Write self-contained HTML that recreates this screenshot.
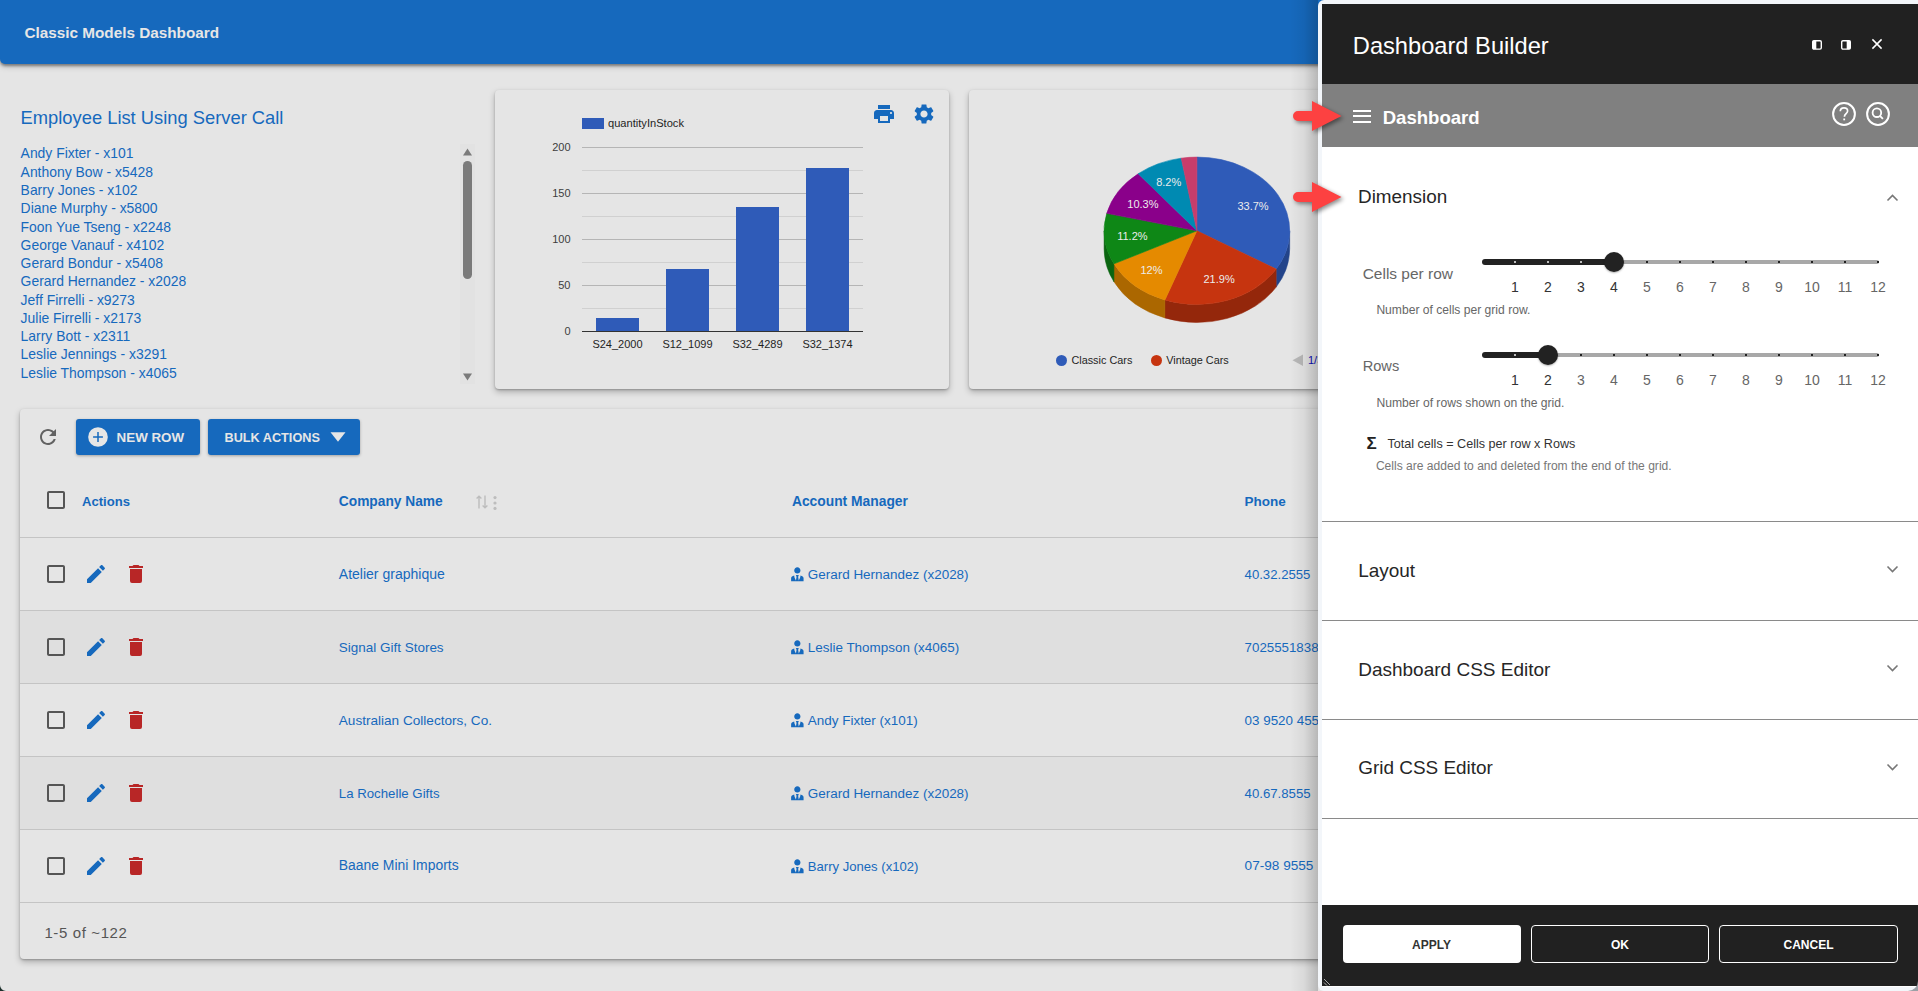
<!DOCTYPE html>
<html><head><meta charset="utf-8"><title>Classic Models Dashboard</title>
<style>
html,body{margin:0;padding:0;}
body{width:1918px;height:991px;overflow:hidden;position:relative;background:#e5e5e5;font-family:"Liberation Sans", sans-serif;}
.t{position:absolute;white-space:nowrap;font-family:"Liberation Sans", sans-serif;}
svg{overflow:visible}
</style></head><body>
<div style="position:absolute;left:0px;top:0px;width:1918px;height:64px;background:#1669bd;border-radius:0 0 0 5px;box-shadow:0 2px 3px rgba(0,0,0,.4),0 3px 6px rgba(0,0,0,.15)"></div>
<div class="t" style="left:24.40px;top:24.55px;font-size:15.3px;line-height:15.3px;color:#e6e6e6;font-weight:700;">Classic Models Dashboard</div>
<div class="t" style="left:20.60px;top:108.78px;font-size:18.34px;line-height:18.34px;color:#1669bd;font-weight:400;">Employee List Using Server Call</div>
<div class="t" style="left:20.60px;top:147.41px;font-size:13.93px;line-height:13.93px;color:#1669bd;font-weight:400;">Andy Fixter - x101</div>
<div class="t" style="left:20.60px;top:165.69px;font-size:13.93px;line-height:13.93px;color:#1669bd;font-weight:400;">Anthony Bow - x5428</div>
<div class="t" style="left:20.60px;top:183.97px;font-size:13.93px;line-height:13.93px;color:#1669bd;font-weight:400;">Barry Jones - x102</div>
<div class="t" style="left:20.60px;top:202.25px;font-size:13.93px;line-height:13.93px;color:#1669bd;font-weight:400;">Diane Murphy - x5800</div>
<div class="t" style="left:20.60px;top:220.53px;font-size:13.93px;line-height:13.93px;color:#1669bd;font-weight:400;">Foon Yue Tseng - x2248</div>
<div class="t" style="left:20.60px;top:238.81px;font-size:13.93px;line-height:13.93px;color:#1669bd;font-weight:400;">George Vanauf - x4102</div>
<div class="t" style="left:20.60px;top:257.09px;font-size:13.93px;line-height:13.93px;color:#1669bd;font-weight:400;">Gerard Bondur - x5408</div>
<div class="t" style="left:20.60px;top:275.37px;font-size:13.93px;line-height:13.93px;color:#1669bd;font-weight:400;">Gerard Hernandez - x2028</div>
<div class="t" style="left:20.60px;top:293.65px;font-size:13.93px;line-height:13.93px;color:#1669bd;font-weight:400;">Jeff Firrelli - x9273</div>
<div class="t" style="left:20.60px;top:311.93px;font-size:13.93px;line-height:13.93px;color:#1669bd;font-weight:400;">Julie Firrelli - x2173</div>
<div class="t" style="left:20.60px;top:330.21px;font-size:13.93px;line-height:13.93px;color:#1669bd;font-weight:400;">Larry Bott - x2311</div>
<div class="t" style="left:20.60px;top:348.49px;font-size:13.93px;line-height:13.93px;color:#1669bd;font-weight:400;">Leslie Jennings - x3291</div>
<div class="t" style="left:20.60px;top:366.77px;font-size:13.93px;line-height:13.93px;color:#1669bd;font-weight:400;">Leslie Thompson - x4065</div>
<div style="position:absolute;left:460px;top:144px;width:15px;height:240px;background:#e2e2e2"></div>
<svg style="position:absolute;left:463px;top:148px;" width="9" height="8" viewBox="0 0 9 8"><path d="M4.5 0.5 L9 7.5 L0 7.5 Z" fill="#7a7a7a"/></svg>
<div style="position:absolute;left:463px;top:161px;width:9px;height:118px;background:#7a7a7a;border-radius:4.5px"></div>
<svg style="position:absolute;left:463px;top:373px;" width="9" height="8" viewBox="0 0 9 8"><path d="M0 0.5 L9 0.5 L4.5 7.5 Z" fill="#7a7a7a"/></svg>
<div style="position:absolute;left:495px;top:89.5px;width:454px;height:299px;background:#e5e5e5;border-radius:4px;box-shadow:0 3px 6px rgba(0,0,0,.25),0 1px 2px rgba(0,0,0,.22)"></div>
<div style="position:absolute;left:582px;top:118px;width:22px;height:11px;background:#2f5bb8"></div>
<div class="t" style="left:608.00px;top:118.09px;font-size:11.12px;line-height:11.12px;color:#1f1f1f;font-weight:400;">quantityInStock</div>
<svg style="position:absolute;left:582px;top:147px;" width="281" height="162" viewBox="0 0 281 162"><rect x="0" y="0" width="281" height="1" fill="#b5b5b5"/><rect x="0" y="23" width="281" height="1" fill="#d0d0d0"/><rect x="0" y="46" width="281" height="1" fill="#b5b5b5"/><rect x="0" y="69" width="281" height="1" fill="#d0d0d0"/><rect x="0" y="92" width="281" height="1" fill="#b5b5b5"/><rect x="0" y="115" width="281" height="1" fill="#d0d0d0"/><rect x="0" y="138" width="281" height="1" fill="#b5b5b5"/><rect x="0" y="161" width="281" height="1" fill="#d0d0d0"/></svg>
<div style="position:absolute;left:596px;top:318px;width:43px;height:13px;background:#2f5bb8"></div>
<div style="position:absolute;left:666px;top:268.7px;width:43px;height:62.30000000000001px;background:#2f5bb8"></div>
<div style="position:absolute;left:736px;top:207px;width:43px;height:124px;background:#2f5bb8"></div>
<div style="position:absolute;left:806px;top:168px;width:43px;height:163px;background:#2f5bb8"></div>
<div style="position:absolute;left:582px;top:331px;width:281px;height:1.2px;background:#333"></div>
<div class="t" style="left:-29.50px;width:600px;text-align:right;top:141.69px;font-size:11px;line-height:11px;color:#3d3d3d;font-weight:400;">200</div>
<div class="t" style="left:-29.50px;width:600px;text-align:right;top:187.69px;font-size:11px;line-height:11px;color:#3d3d3d;font-weight:400;">150</div>
<div class="t" style="left:-29.50px;width:600px;text-align:right;top:233.69px;font-size:11px;line-height:11px;color:#3d3d3d;font-weight:400;">100</div>
<div class="t" style="left:-29.50px;width:600px;text-align:right;top:279.69px;font-size:11px;line-height:11px;color:#3d3d3d;font-weight:400;">50</div>
<div class="t" style="left:-29.50px;width:600px;text-align:right;top:325.69px;font-size:11px;line-height:11px;color:#3d3d3d;font-weight:400;">0</div>
<div class="t" style="left:317.50px;width:600px;text-align:center;top:338.69px;font-size:11px;line-height:11px;color:#1f1f1f;font-weight:400;">S24_2000</div>
<div class="t" style="left:387.50px;width:600px;text-align:center;top:338.69px;font-size:11px;line-height:11px;color:#1f1f1f;font-weight:400;">S12_1099</div>
<div class="t" style="left:457.50px;width:600px;text-align:center;top:338.69px;font-size:11px;line-height:11px;color:#1f1f1f;font-weight:400;">S32_4289</div>
<div class="t" style="left:527.50px;width:600px;text-align:center;top:338.69px;font-size:11px;line-height:11px;color:#1f1f1f;font-weight:400;">S32_1374</div>
<svg style="position:absolute;left:872px;top:102px;" width="24" height="24" viewBox="0 0 24 24"><path fill="#1669bd" d="M19 8H5c-1.66 0-3 1.34-3 3v6h4v4h12v-4h4v-6c0-1.66-1.34-3-3-3zm-3 11H8v-5h8v5zm3-7c-.55 0-1-.45-1-1s.45-1 1-1 1 .45 1 1-.45 1-1 1zm1-9H6v4h12V3z"/></svg>
<svg style="position:absolute;left:912px;top:102px;" width="24" height="24" viewBox="0 0 24 24"><path fill="#1669bd" d="M19.14 12.94c.04-.3.06-.61.06-.94 0-.32-.02-.64-.07-.94l2.03-1.58c.18-.14.23-.41.12-.61l-1.92-3.32c-.12-.22-.37-.29-.59-.22l-2.39.96c-.5-.38-1.03-.7-1.62-.94l-.36-2.54c-.04-.24-.24-.41-.48-.41h-3.84c-.24 0-.43.17-.47.41l-.36 2.54c-.59.24-1.13.57-1.62.94l-2.39-.96c-.22-.08-.47 0-.59.22L2.74 8.87c-.12.21-.08.47.12.61l2.03 1.58c-.05.3-.09.63-.09.94s.02.64.07.94l-2.03 1.58c-.18.14-.23.41-.12.61l1.92 3.32c.12.22.37.29.59.22l2.39-.96c.5.38 1.03.7 1.62.94l.36 2.54c.05.24.24.41.48.41h3.84c.24 0 .44-.17.47-.41l.36-2.54c.59-.24 1.13-.56 1.62-.94l2.39.96c.22.08.47 0 .59-.22l1.92-3.32c.12-.22.07-.47-.12-.61l-2.01-1.58zM12 15.6c-1.98 0-3.6-1.62-3.6-3.6s1.62-3.6 3.6-3.6 3.6 1.62 3.6 3.6-1.62 3.6-3.6 3.6z"/></svg>
<div style="position:absolute;left:969px;top:89.5px;width:400px;height:299px;background:#e5e5e5;border-radius:4px;box-shadow:0 3px 6px rgba(0,0,0,.25),0 1px 2px rgba(0,0,0,.22)"></div>
<svg style="position:absolute;left:960px;top:140px;" width="360" height="200" viewBox="0 0 360 200"><path fill="#23448a" d="M329.70 90.80 A92.8 73.7 0 0 1 316.18 129.11 L316.18 147.11 A92.8 73.7 0 0 0 329.70 108.80 Z" stroke="#23448a" stroke-width="0.5"/><path fill="#94270b" d="M316.18 129.11 A92.8 73.7 0 0 1 204.92 159.98 L204.92 177.98 A92.8 73.7 0 0 0 316.18 147.11 Z" stroke="#94270b" stroke-width="0.5"/><path fill="#ab6700" d="M204.92 159.98 A92.8 73.7 0 0 1 153.95 123.85 L153.95 141.85 A92.8 73.7 0 0 0 204.92 177.98 Z" stroke="#ab6700" stroke-width="0.5"/><path fill="#0a6510" d="M153.95 123.85 A92.8 73.7 0 0 1 144.10 90.80 L144.10 108.80 A92.8 73.7 0 0 0 153.95 141.85 Z" stroke="#0a6510" stroke-width="0.5"/><path fill="#2f5bb8" stroke="#2f5bb8" stroke-width="0.6" d="M236.90 90.80 L236.90 17.10 A92.8 73.7 0 0 1 316.18 129.11 Z"/><path fill="#c6340f" stroke="#c6340f" stroke-width="0.6" d="M236.90 90.80 L316.18 129.11 A92.8 73.7 0 0 1 204.92 159.98 Z"/><path fill="#e58a00" stroke="#e58a00" stroke-width="0.6" d="M236.90 90.80 L204.92 159.98 A92.8 73.7 0 0 1 153.95 123.85 Z"/><path fill="#0e8716" stroke="#0e8716" stroke-width="0.6" d="M236.90 90.80 L153.95 123.85 A92.8 73.7 0 0 1 146.73 73.37 Z"/><path fill="#8a008a" stroke="#8a008a" stroke-width="0.6" d="M236.90 90.80 L146.73 73.37 A92.8 73.7 0 0 1 178.20 33.72 Z"/><path fill="#008ab2" stroke="#008ab2" stroke-width="0.6" d="M236.90 90.80 L178.20 33.72 A92.8 73.7 0 0 1 221.23 18.16 Z"/><path fill="#c73d6b" stroke="#c73d6b" stroke-width="0.6" d="M236.90 90.80 L221.23 18.16 A92.8 73.7 0 0 1 236.90 17.10 Z"/></svg>
<div class="t" style="left:953.00px;width:600px;text-align:center;top:200.89px;font-size:11px;line-height:11px;color:#ececec;font-weight:400;">33.7%</div>
<div class="t" style="left:919.10px;width:600px;text-align:center;top:274.49px;font-size:11px;line-height:11px;color:#ececec;font-weight:400;">21.9%</div>
<div class="t" style="left:851.50px;width:600px;text-align:center;top:264.79px;font-size:11px;line-height:11px;color:#ececec;font-weight:400;">12%</div>
<div class="t" style="left:832.40px;width:600px;text-align:center;top:231.09px;font-size:11px;line-height:11px;color:#ececec;font-weight:400;">11.2%</div>
<div class="t" style="left:842.90px;width:600px;text-align:center;top:198.89px;font-size:11px;line-height:11px;color:#ececec;font-weight:400;">10.3%</div>
<div class="t" style="left:868.70px;width:600px;text-align:center;top:177.09px;font-size:11px;line-height:11px;color:#ececec;font-weight:400;">8.2%</div>
<svg style="position:absolute;left:1055.9px;top:354.9px;" width="11" height="11" viewBox="0 0 11 11"><circle cx="5.5" cy="5.5" r="5.5" fill="#2f5bb8"/></svg>
<div class="t" style="left:1071.40px;top:355.10px;font-size:10.87px;line-height:10.87px;color:#1f1f1f;font-weight:400;">Classic Cars</div>
<svg style="position:absolute;left:1151.1px;top:354.9px;" width="11" height="11" viewBox="0 0 11 11"><circle cx="5.5" cy="5.5" r="5.5" fill="#c6340f"/></svg>
<div class="t" style="left:1166.20px;top:355.10px;font-size:10.87px;line-height:10.87px;color:#1f1f1f;font-weight:400;">Vintage Cars</div>
<svg style="position:absolute;left:1292px;top:354px;" width="12" height="13" viewBox="0 0 12 13"><path d="M11 0.5 L11 12 L0.5 6.2 Z" fill="#b8b8b8"/></svg>
<div class="t" style="left:1308.00px;top:354.99px;font-size:11px;line-height:11px;color:#0d0db5;font-weight:400;">1/3</div>
<div style="position:absolute;left:20px;top:409px;width:1400px;height:550px;background:#e5e5e5;border-radius:4px;box-shadow:0 3px 6px rgba(0,0,0,.25),0 1px 2px rgba(0,0,0,.22)"></div>
<svg style="position:absolute;left:36px;top:425px;" width="24" height="24" viewBox="0 0 24 24"><path fill="#626262" d="M17.65 6.35C16.2 4.9 14.21 4 12 4c-4.42 0-7.99 3.58-7.99 8s3.57 8 7.99 8c3.73 0 6.84-2.55 7.73-6h-2.08c-.82 2.33-3.04 4-5.65 4-3.31 0-6-2.69-6-6s2.69-6 6-6c1.66 0 3.14.69 4.22 1.78L13 11h7V4l-2.35 2.35z"/></svg>
<div style="position:absolute;left:76px;top:419px;width:124px;height:36px;background:#1669bd;border-radius:3px;box-shadow:0 1px 3px rgba(0,0,0,.3)"></div>
<svg style="position:absolute;left:88px;top:427px;" width="20" height="20" viewBox="0 0 20 20"><circle cx="10" cy="10" r="9.8" fill="#e6e6e6"/><path d="M10 5.1v9.8M5.1 10h9.8" stroke="#1669bd" stroke-width="1.5"/></svg>
<div class="t" style="left:116.60px;top:430.88px;font-size:13.37px;line-height:13.37px;color:#e6e6e6;font-weight:700;">NEW ROW</div>
<div style="position:absolute;left:208px;top:419px;width:152px;height:36px;background:#1669bd;border-radius:3px;box-shadow:0 1px 3px rgba(0,0,0,.3)"></div>
<div class="t" style="left:224.50px;top:432.25px;font-size:12.7px;line-height:12.7px;color:#e6e6e6;font-weight:700;">BULK ACTIONS</div>
<svg style="position:absolute;left:330px;top:432px;" width="16" height="10" viewBox="0 0 16 10"><path d="M0.5 0.3 L15.5 0.3 L8 9.7 Z" fill="#e6e6e6"/></svg>
<svg style="position:absolute;left:44px;top:488px;" width="24" height="24" viewBox="0 0 24 24"><path fill="#555" d="M19 5v14H5V5h14m0-2H5c-1.1 0-2 .9-2 2v14c0 1.1.9 2 2 2h14c1.1 0 2-.9 2-2V5c0-1.1-.9-2-2-2z"/></svg>
<div class="t" style="left:82.00px;top:494.52px;font-size:13.09px;line-height:13.09px;color:#1669bd;font-weight:700;">Actions</div>
<div class="t" style="left:338.80px;top:494.95px;font-size:13.76px;line-height:13.76px;color:#1669bd;font-weight:700;">Company Name</div>
<svg style="position:absolute;left:476px;top:495px;" width="12" height="14" viewBox="0 0 12 14"><path d="M3 13.5V1.2M0.6 3.6L3 1.2L5.4 3.6M9 0.5V12.8M6.6 10.4L9 12.8L11.4 10.4" stroke="#bdbdbd" stroke-width="1.4" fill="none"/></svg>
<svg style="position:absolute;left:492px;top:495px;" width="6" height="15" viewBox="0 0 6 15"><circle cx="3" cy="2.6" r="1.6" fill="#bdbdbd"/><circle cx="3" cy="8" r="1.6" fill="#bdbdbd"/><circle cx="3" cy="13.4" r="1.6" fill="#bdbdbd"/></svg>
<div class="t" style="left:791.90px;top:494.89px;font-size:13.83px;line-height:13.83px;color:#1669bd;font-weight:700;">Account Manager</div>
<div class="t" style="left:1244.50px;top:495.17px;font-size:13.5px;line-height:13.5px;color:#1669bd;font-weight:700;">Phone</div>
<div style="position:absolute;left:20px;top:537px;width:1300px;height:1px;background:#c4c4c4"></div>
<div style="position:absolute;left:20px;top:610px;width:1300px;height:1px;background:#c4c4c4"></div>
<svg style="position:absolute;left:44px;top:562px;" width="24" height="24" viewBox="0 0 24 24"><path fill="#555" d="M19 5v14H5V5h14m0-2H5c-1.1 0-2 .9-2 2v14c0 1.1.9 2 2 2h14c1.1 0 2-.9 2-2V5c0-1.1-.9-2-2-2z"/></svg>
<svg style="position:absolute;left:84px;top:562px;" width="24" height="24" viewBox="0 0 24 24"><path fill="#1669bd" d="M3 17.25V21h3.75L17.81 9.94l-3.75-3.75L3 17.25zM20.71 7.04c.39-.39.39-1.02 0-1.41l-2.34-2.34c-.39-.39-1.02-.39-1.41 0l-1.83 1.83 3.75 3.75 1.83-1.83z"/></svg>
<svg style="position:absolute;left:124px;top:562px;" width="24" height="24" viewBox="0 0 24 24"><path fill="#b82626" d="M19,4H15.5L14.5,3H9.5L8.5,4H5V6H19M6,19A2,2 0 0,0 8,21H16A2,2 0 0,0 18,19V7H6V19Z"/></svg>
<div class="t" style="left:338.80px;top:567.13px;font-size:14.02px;line-height:14.02px;color:#1669bd;font-weight:400;">Atelier graphique</div>
<svg style="position:absolute;left:788.4px;top:564.6px;" width="18.7" height="18.7" viewBox="0 0 24 24"><path fill="#1669bd" d="M12 3C14.21 3 16 4.79 16 7S14.21 11 12 11 8 9.21 8 7 9.79 3 12 3M16 13.54C16 14.6 15.72 17.07 13.81 19.83L13 15L13.94 13.12C13.32 13.05 12.67 13 12 13S10.68 13.05 10.06 13.12L11 15L10.19 19.83C8.28 17.07 8 14.6 8 13.54C5.61 14.24 4 15.5 4 17V21H20V17C20 15.5 18.4 14.24 16 13.54Z"/></svg>
<div class="t" style="left:807.80px;top:567.61px;font-size:13.46px;line-height:13.46px;color:#1669bd;font-weight:400;">Gerard Hernandez (x2028)</div>
<div class="t" style="left:1244.60px;top:567.87px;font-size:13.15px;line-height:13.15px;color:#1669bd;font-weight:400;">40.32.2555</div>
<div style="position:absolute;left:20px;top:611px;width:1300px;height:72px;background:#dfdfdf"></div>
<div style="position:absolute;left:20px;top:683px;width:1300px;height:1px;background:#c4c4c4"></div>
<svg style="position:absolute;left:44px;top:635px;" width="24" height="24" viewBox="0 0 24 24"><path fill="#555" d="M19 5v14H5V5h14m0-2H5c-1.1 0-2 .9-2 2v14c0 1.1.9 2 2 2h14c1.1 0 2-.9 2-2V5c0-1.1-.9-2-2-2z"/></svg>
<svg style="position:absolute;left:84px;top:635px;" width="24" height="24" viewBox="0 0 24 24"><path fill="#1669bd" d="M3 17.25V21h3.75L17.81 9.94l-3.75-3.75L3 17.25zM20.71 7.04c.39-.39.39-1.02 0-1.41l-2.34-2.34c-.39-.39-1.02-.39-1.41 0l-1.83 1.83 3.75 3.75 1.83-1.83z"/></svg>
<svg style="position:absolute;left:124px;top:635px;" width="24" height="24" viewBox="0 0 24 24"><path fill="#b82626" d="M19,4H15.5L14.5,3H9.5L8.5,4H5V6H19M6,19A2,2 0 0,0 8,21H16A2,2 0 0,0 18,19V7H6V19Z"/></svg>
<div class="t" style="left:338.80px;top:640.60px;font-size:13.47px;line-height:13.47px;color:#1669bd;font-weight:400;">Signal Gift Stores</div>
<svg style="position:absolute;left:788.4px;top:637.6px;" width="18.7" height="18.7" viewBox="0 0 24 24"><path fill="#1669bd" d="M12 3C14.21 3 16 4.79 16 7S14.21 11 12 11 8 9.21 8 7 9.79 3 12 3M16 13.54C16 14.6 15.72 17.07 13.81 19.83L13 15L13.94 13.12C13.32 13.05 12.67 13 12 13S10.68 13.05 10.06 13.12L11 15L10.19 19.83C8.28 17.07 8 14.6 8 13.54C5.61 14.24 4 15.5 4 17V21H20V17C20 15.5 18.4 14.24 16 13.54Z"/></svg>
<div class="t" style="left:807.80px;top:640.62px;font-size:13.44px;line-height:13.44px;color:#1669bd;font-weight:400;">Leslie Thompson (x4065)</div>
<div class="t" style="left:1244.60px;top:640.74px;font-size:13.3px;line-height:13.3px;color:#1669bd;font-weight:400;">7025551838</div>
<div style="position:absolute;left:20px;top:756px;width:1300px;height:1px;background:#c4c4c4"></div>
<svg style="position:absolute;left:44px;top:708px;" width="24" height="24" viewBox="0 0 24 24"><path fill="#555" d="M19 5v14H5V5h14m0-2H5c-1.1 0-2 .9-2 2v14c0 1.1.9 2 2 2h14c1.1 0 2-.9 2-2V5c0-1.1-.9-2-2-2z"/></svg>
<svg style="position:absolute;left:84px;top:708px;" width="24" height="24" viewBox="0 0 24 24"><path fill="#1669bd" d="M3 17.25V21h3.75L17.81 9.94l-3.75-3.75L3 17.25zM20.71 7.04c.39-.39.39-1.02 0-1.41l-2.34-2.34c-.39-.39-1.02-.39-1.41 0l-1.83 1.83 3.75 3.75 1.83-1.83z"/></svg>
<svg style="position:absolute;left:124px;top:708px;" width="24" height="24" viewBox="0 0 24 24"><path fill="#b82626" d="M19,4H15.5L14.5,3H9.5L8.5,4H5V6H19M6,19A2,2 0 0,0 8,21H16A2,2 0 0,0 18,19V7H6V19Z"/></svg>
<div class="t" style="left:338.80px;top:713.50px;font-size:13.58px;line-height:13.58px;color:#1669bd;font-weight:400;">Australian Collectors, Co.</div>
<svg style="position:absolute;left:788.4px;top:710.6px;" width="18.7" height="18.7" viewBox="0 0 24 24"><path fill="#1669bd" d="M12 3C14.21 3 16 4.79 16 7S14.21 11 12 11 8 9.21 8 7 9.79 3 12 3M16 13.54C16 14.6 15.72 17.07 13.81 19.83L13 15L13.94 13.12C13.32 13.05 12.67 13 12 13S10.68 13.05 10.06 13.12L11 15L10.19 19.83C8.28 17.07 8 14.6 8 13.54C5.61 14.24 4 15.5 4 17V21H20V17C20 15.5 18.4 14.24 16 13.54Z"/></svg>
<div class="t" style="left:807.80px;top:713.61px;font-size:13.46px;line-height:13.46px;color:#1669bd;font-weight:400;">Andy Fixter (x101)</div>
<div class="t" style="left:1244.60px;top:713.66px;font-size:13.4px;line-height:13.4px;color:#1669bd;font-weight:400;">03 9520 4555</div>
<div style="position:absolute;left:20px;top:757px;width:1300px;height:72px;background:#dfdfdf"></div>
<div style="position:absolute;left:20px;top:829px;width:1300px;height:1px;background:#c4c4c4"></div>
<svg style="position:absolute;left:44px;top:781px;" width="24" height="24" viewBox="0 0 24 24"><path fill="#555" d="M19 5v14H5V5h14m0-2H5c-1.1 0-2 .9-2 2v14c0 1.1.9 2 2 2h14c1.1 0 2-.9 2-2V5c0-1.1-.9-2-2-2z"/></svg>
<svg style="position:absolute;left:84px;top:781px;" width="24" height="24" viewBox="0 0 24 24"><path fill="#1669bd" d="M3 17.25V21h3.75L17.81 9.94l-3.75-3.75L3 17.25zM20.71 7.04c.39-.39.39-1.02 0-1.41l-2.34-2.34c-.39-.39-1.02-.39-1.41 0l-1.83 1.83 3.75 3.75 1.83-1.83z"/></svg>
<svg style="position:absolute;left:124px;top:781px;" width="24" height="24" viewBox="0 0 24 24"><path fill="#b82626" d="M19,4H15.5L14.5,3H9.5L8.5,4H5V6H19M6,19A2,2 0 0,0 8,21H16A2,2 0 0,0 18,19V7H6V19Z"/></svg>
<div class="t" style="left:338.80px;top:786.79px;font-size:13.24px;line-height:13.24px;color:#1669bd;font-weight:400;">La Rochelle Gifts</div>
<svg style="position:absolute;left:788.4px;top:783.6px;" width="18.7" height="18.7" viewBox="0 0 24 24"><path fill="#1669bd" d="M12 3C14.21 3 16 4.79 16 7S14.21 11 12 11 8 9.21 8 7 9.79 3 12 3M16 13.54C16 14.6 15.72 17.07 13.81 19.83L13 15L13.94 13.12C13.32 13.05 12.67 13 12 13S10.68 13.05 10.06 13.12L11 15L10.19 19.83C8.28 17.07 8 14.6 8 13.54C5.61 14.24 4 15.5 4 17V21H20V17C20 15.5 18.4 14.24 16 13.54Z"/></svg>
<div class="t" style="left:807.80px;top:786.61px;font-size:13.46px;line-height:13.46px;color:#1669bd;font-weight:400;">Gerard Hernandez (x2028)</div>
<div class="t" style="left:1244.60px;top:786.83px;font-size:13.19px;line-height:13.19px;color:#1669bd;font-weight:400;">40.67.8555</div>
<div style="position:absolute;left:20px;top:902px;width:1300px;height:1px;background:#c4c4c4"></div>
<svg style="position:absolute;left:44px;top:854px;" width="24" height="24" viewBox="0 0 24 24"><path fill="#555" d="M19 5v14H5V5h14m0-2H5c-1.1 0-2 .9-2 2v14c0 1.1.9 2 2 2h14c1.1 0 2-.9 2-2V5c0-1.1-.9-2-2-2z"/></svg>
<svg style="position:absolute;left:84px;top:854px;" width="24" height="24" viewBox="0 0 24 24"><path fill="#1669bd" d="M3 17.25V21h3.75L17.81 9.94l-3.75-3.75L3 17.25zM20.71 7.04c.39-.39.39-1.02 0-1.41l-2.34-2.34c-.39-.39-1.02-.39-1.41 0l-1.83 1.83 3.75 3.75 1.83-1.83z"/></svg>
<svg style="position:absolute;left:124px;top:854px;" width="24" height="24" viewBox="0 0 24 24"><path fill="#b82626" d="M19,4H15.5L14.5,3H9.5L8.5,4H5V6H19M6,19A2,2 0 0,0 8,21H16A2,2 0 0,0 18,19V7H6V19Z"/></svg>
<div class="t" style="left:338.80px;top:859.23px;font-size:13.91px;line-height:13.91px;color:#1669bd;font-weight:400;">Baane Mini Imports</div>
<svg style="position:absolute;left:788.4px;top:856.6px;" width="18.7" height="18.7" viewBox="0 0 24 24"><path fill="#1669bd" d="M12 3C14.21 3 16 4.79 16 7S14.21 11 12 11 8 9.21 8 7 9.79 3 12 3M16 13.54C16 14.6 15.72 17.07 13.81 19.83L13 15L13.94 13.12C13.32 13.05 12.67 13 12 13S10.68 13.05 10.06 13.12L11 15L10.19 19.83C8.28 17.07 8 14.6 8 13.54C5.61 14.24 4 15.5 4 17V21H20V17C20 15.5 18.4 14.24 16 13.54Z"/></svg>
<div class="t" style="left:807.80px;top:859.91px;font-size:13.1px;line-height:13.1px;color:#1669bd;font-weight:400;">Barry Jones (x102)</div>
<div class="t" style="left:1244.60px;top:859.49px;font-size:13.6px;line-height:13.6px;color:#1669bd;font-weight:400;">07-98 9555</div>
<div class="t" style="left:44.40px;top:925.30px;font-size:15px;line-height:15px;color:#555;font-weight:400;letter-spacing:0.62px">1-5 of ~122</div>
<div style="position:absolute;left:1290px;top:0px;width:28px;height:991px;background:linear-gradient(to right,rgba(0,0,0,0),rgba(0,0,0,.05) 50%,rgba(0,0,0,.2))"></div>
<div style="position:absolute;left:1318px;top:0px;width:600px;height:991px;background:#f3f6fa;border-radius:6px 0 0 6px"></div>
<div style="position:absolute;left:1322px;top:4px;width:596px;height:80px;background:#212121"></div>
<div class="t" style="left:1352.80px;top:34.97px;font-size:23.66px;line-height:23.66px;color:#fff;font-weight:400;">Dashboard Builder</div>
<svg style="position:absolute;left:1811.5px;top:39.7px;" width="10" height="10" viewBox="0 0 10 10"><rect x="0.7" y="0.7" width="8.6" height="8.4" rx="1.3" fill="none" stroke="#fff" stroke-width="1.4"/><rect x="0.7" y="0.7" width="3.6" height="8.4" fill="#fff"/></svg>
<svg style="position:absolute;left:1840.5px;top:39.7px;" width="10" height="10" viewBox="0 0 10 10"><rect x="0.7" y="0.7" width="8.6" height="8.4" rx="1.3" fill="none" stroke="#fff" stroke-width="1.4"/><rect x="5.7" y="0.7" width="3.6" height="8.4" fill="#fff"/></svg>
<svg style="position:absolute;left:1871px;top:38px;" width="12" height="12" viewBox="0 0 12 12"><path d="M1.4 1.4L10.6 10.6M10.6 1.4L1.4 10.6" stroke="#fff" stroke-width="1.5"/></svg>
<div style="position:absolute;left:1322px;top:84px;width:596px;height:63.3px;background:#808080"></div>
<div style="position:absolute;left:1353px;top:109.6px;width:18px;height:2px;background:#fff"></div>
<div style="position:absolute;left:1353px;top:115.3px;width:18px;height:2px;background:#fff"></div>
<div style="position:absolute;left:1353px;top:120.9px;width:18px;height:2px;background:#fff"></div>
<div class="t" style="left:1382.70px;top:109.48px;font-size:18.57px;line-height:18.57px;color:#fff;font-weight:700;">Dashboard</div>
<svg style="position:absolute;left:1832px;top:102px;" width="24" height="24" viewBox="0 0 24 24"><circle cx="12" cy="12" r="10.9" fill="none" stroke="#fff" stroke-width="2"/><path d="M8.3 9.3c0-2.2 1.7-3.4 3.7-3.4 2.1 0 3.6 1.3 3.6 3.1 0 2.6-3.2 2.7-3.2 5.8" fill="none" stroke="#fff" stroke-width="1.7"/><rect x="11.3" y="16.5" width="1.8" height="1.8" fill="#fff"/></svg>
<svg style="position:absolute;left:1866px;top:102px;" width="24" height="24" viewBox="0 0 24 24"><circle cx="12" cy="12" r="10.9" fill="none" stroke="#fff" stroke-width="2"/><circle cx="10.9" cy="10.7" r="4.3" fill="none" stroke="#fff" stroke-width="1.8"/><path d="M13.9 13.8L16.9 16.8" stroke="#fff" stroke-width="1.9"/></svg>
<div style="position:absolute;left:1322px;top:147.3px;width:596px;height:757.7px;background:#fff"></div>
<div class="t" style="left:1358.00px;top:188.30px;font-size:18.9px;line-height:18.9px;color:#262626;font-weight:400;">Dimension</div>
<svg style="position:absolute;left:1886px;top:193px;" width="13" height="9" viewBox="0 0 13 9"><path d="M1.5 7.5L6.5 2.5L11.5 7.5" fill="none" stroke="#777" stroke-width="1.6"/></svg>
<div class="t" style="left:1362.70px;top:265.60px;font-size:15.48px;line-height:15.48px;color:#666;font-weight:400;">Cells per row</div>
<div style="position:absolute;left:1614px;top:260px;width:265px;height:4px;background:#a8a8a8;border-radius:2px"></div>
<div style="position:absolute;left:1482px;top:259px;width:132px;height:6px;background:#222;border-radius:3px"></div>
<div style="position:absolute;left:1514px;top:261px;width:2px;height:2px;background:#bdbdbd"></div>
<div class="t" style="left:1215.00px;width:600px;text-align:center;top:280.15px;font-size:14px;line-height:14px;color:#333;font-weight:400;">1</div>
<div style="position:absolute;left:1547px;top:261px;width:2px;height:2px;background:#bdbdbd"></div>
<div class="t" style="left:1248.00px;width:600px;text-align:center;top:280.15px;font-size:14px;line-height:14px;color:#333;font-weight:400;">2</div>
<div style="position:absolute;left:1580px;top:261px;width:2px;height:2px;background:#bdbdbd"></div>
<div class="t" style="left:1281.00px;width:600px;text-align:center;top:280.15px;font-size:14px;line-height:14px;color:#333;font-weight:400;">3</div>
<div style="position:absolute;left:1613px;top:261px;width:2px;height:2px;background:#222"></div>
<div class="t" style="left:1314.00px;width:600px;text-align:center;top:280.15px;font-size:14px;line-height:14px;color:#333;font-weight:400;">4</div>
<div style="position:absolute;left:1646px;top:261px;width:2px;height:2px;background:#222"></div>
<div class="t" style="left:1347.00px;width:600px;text-align:center;top:280.15px;font-size:14px;line-height:14px;color:#666;font-weight:400;">5</div>
<div style="position:absolute;left:1679px;top:261px;width:2px;height:2px;background:#222"></div>
<div class="t" style="left:1380.00px;width:600px;text-align:center;top:280.15px;font-size:14px;line-height:14px;color:#666;font-weight:400;">6</div>
<div style="position:absolute;left:1712px;top:261px;width:2px;height:2px;background:#222"></div>
<div class="t" style="left:1413.00px;width:600px;text-align:center;top:280.15px;font-size:14px;line-height:14px;color:#666;font-weight:400;">7</div>
<div style="position:absolute;left:1745px;top:261px;width:2px;height:2px;background:#222"></div>
<div class="t" style="left:1446.00px;width:600px;text-align:center;top:280.15px;font-size:14px;line-height:14px;color:#666;font-weight:400;">8</div>
<div style="position:absolute;left:1778px;top:261px;width:2px;height:2px;background:#222"></div>
<div class="t" style="left:1479.00px;width:600px;text-align:center;top:280.15px;font-size:14px;line-height:14px;color:#666;font-weight:400;">9</div>
<div style="position:absolute;left:1811px;top:261px;width:2px;height:2px;background:#222"></div>
<div class="t" style="left:1512.00px;width:600px;text-align:center;top:280.15px;font-size:14px;line-height:14px;color:#666;font-weight:400;">10</div>
<div style="position:absolute;left:1844px;top:261px;width:2px;height:2px;background:#222"></div>
<div class="t" style="left:1545.00px;width:600px;text-align:center;top:280.15px;font-size:14px;line-height:14px;color:#666;font-weight:400;">11</div>
<div style="position:absolute;left:1877px;top:261px;width:2px;height:2px;background:#222"></div>
<div class="t" style="left:1578.00px;width:600px;text-align:center;top:280.15px;font-size:14px;line-height:14px;color:#666;font-weight:400;">12</div>
<div style="position:absolute;left:1604px;top:252px;width:20px;height:20px;border-radius:50%;background:#222;box-shadow:0 1px 2px rgba(0,0,0,.3)"></div>
<div class="t" style="left:1376.40px;top:304.36px;font-size:12.1px;line-height:12.1px;color:#666;font-weight:400;">Number of cells per grid row.</div>
<div class="t" style="left:1362.70px;top:359.24px;font-size:14.6px;line-height:14.6px;color:#666;font-weight:400;">Rows</div>
<div style="position:absolute;left:1548px;top:353px;width:331px;height:4px;background:#a8a8a8;border-radius:2px"></div>
<div style="position:absolute;left:1482px;top:352px;width:66px;height:6px;background:#222;border-radius:3px"></div>
<div style="position:absolute;left:1514px;top:354px;width:2px;height:2px;background:#bdbdbd"></div>
<div class="t" style="left:1215.00px;width:600px;text-align:center;top:373.15px;font-size:14px;line-height:14px;color:#333;font-weight:400;">1</div>
<div style="position:absolute;left:1547px;top:354px;width:2px;height:2px;background:#222"></div>
<div class="t" style="left:1248.00px;width:600px;text-align:center;top:373.15px;font-size:14px;line-height:14px;color:#333;font-weight:400;">2</div>
<div style="position:absolute;left:1580px;top:354px;width:2px;height:2px;background:#222"></div>
<div class="t" style="left:1281.00px;width:600px;text-align:center;top:373.15px;font-size:14px;line-height:14px;color:#666;font-weight:400;">3</div>
<div style="position:absolute;left:1613px;top:354px;width:2px;height:2px;background:#222"></div>
<div class="t" style="left:1314.00px;width:600px;text-align:center;top:373.15px;font-size:14px;line-height:14px;color:#666;font-weight:400;">4</div>
<div style="position:absolute;left:1646px;top:354px;width:2px;height:2px;background:#222"></div>
<div class="t" style="left:1347.00px;width:600px;text-align:center;top:373.15px;font-size:14px;line-height:14px;color:#666;font-weight:400;">5</div>
<div style="position:absolute;left:1679px;top:354px;width:2px;height:2px;background:#222"></div>
<div class="t" style="left:1380.00px;width:600px;text-align:center;top:373.15px;font-size:14px;line-height:14px;color:#666;font-weight:400;">6</div>
<div style="position:absolute;left:1712px;top:354px;width:2px;height:2px;background:#222"></div>
<div class="t" style="left:1413.00px;width:600px;text-align:center;top:373.15px;font-size:14px;line-height:14px;color:#666;font-weight:400;">7</div>
<div style="position:absolute;left:1745px;top:354px;width:2px;height:2px;background:#222"></div>
<div class="t" style="left:1446.00px;width:600px;text-align:center;top:373.15px;font-size:14px;line-height:14px;color:#666;font-weight:400;">8</div>
<div style="position:absolute;left:1778px;top:354px;width:2px;height:2px;background:#222"></div>
<div class="t" style="left:1479.00px;width:600px;text-align:center;top:373.15px;font-size:14px;line-height:14px;color:#666;font-weight:400;">9</div>
<div style="position:absolute;left:1811px;top:354px;width:2px;height:2px;background:#222"></div>
<div class="t" style="left:1512.00px;width:600px;text-align:center;top:373.15px;font-size:14px;line-height:14px;color:#666;font-weight:400;">10</div>
<div style="position:absolute;left:1844px;top:354px;width:2px;height:2px;background:#222"></div>
<div class="t" style="left:1545.00px;width:600px;text-align:center;top:373.15px;font-size:14px;line-height:14px;color:#666;font-weight:400;">11</div>
<div style="position:absolute;left:1877px;top:354px;width:2px;height:2px;background:#222"></div>
<div class="t" style="left:1578.00px;width:600px;text-align:center;top:373.15px;font-size:14px;line-height:14px;color:#666;font-weight:400;">12</div>
<div style="position:absolute;left:1538px;top:345px;width:20px;height:20px;border-radius:50%;background:#222;box-shadow:0 1px 2px rgba(0,0,0,.3)"></div>
<div class="t" style="left:1376.40px;top:396.93px;font-size:12.13px;line-height:12.13px;color:#666;font-weight:400;">Number of rows shown on the grid.</div>
<div class="t" style="left:1366.50px;top:435.41px;font-size:17px;line-height:17px;color:#222;font-weight:700;">&Sigma;</div>
<div class="t" style="left:1387.40px;top:437.73px;font-size:12.6px;line-height:12.6px;color:#333;font-weight:400;">Total cells = Cells per row x Rows</div>
<div class="t" style="left:1375.90px;top:459.98px;font-size:12.07px;line-height:12.07px;color:#777;font-weight:400;">Cells are added to and deleted from the end of the grid.</div>
<div style="position:absolute;left:1322px;top:520.5px;width:596px;height:1.2px;background:#8a8a8a"></div>
<div style="position:absolute;left:1322px;top:619.5px;width:596px;height:1.2px;background:#8a8a8a"></div>
<div style="position:absolute;left:1322px;top:718.5px;width:596px;height:1.2px;background:#8a8a8a"></div>
<div style="position:absolute;left:1322px;top:817.5px;width:596px;height:1.2px;background:#8a8a8a"></div>
<div class="t" style="left:1358.20px;top:561.33px;font-size:18.98px;line-height:18.98px;color:#262626;font-weight:400;">Layout</div>
<svg style="position:absolute;left:1886px;top:564.5px;" width="13" height="9" viewBox="0 0 13 9"><path d="M1.5 1.5L6.5 6.5L11.5 1.5" fill="none" stroke="#777" stroke-width="1.6"/></svg>
<div class="t" style="left:1358.20px;top:660.32px;font-size:19.0px;line-height:19.0px;color:#262626;font-weight:400;">Dashboard CSS Editor</div>
<svg style="position:absolute;left:1886px;top:663.5px;" width="13" height="9" viewBox="0 0 13 9"><path d="M1.5 1.5L6.5 6.5L11.5 1.5" fill="none" stroke="#777" stroke-width="1.6"/></svg>
<div class="t" style="left:1358.20px;top:759.36px;font-size:18.95px;line-height:18.95px;color:#262626;font-weight:400;">Grid CSS Editor</div>
<svg style="position:absolute;left:1886px;top:762.5px;" width="13" height="9" viewBox="0 0 13 9"><path d="M1.5 1.5L6.5 6.5L11.5 1.5" fill="none" stroke="#777" stroke-width="1.6"/></svg>
<div style="position:absolute;left:1322px;top:905px;width:596px;height:82px;background:#212121"></div>
<div style="position:absolute;left:1342.5px;top:925.3px;width:178px;height:37.3px;background:#fff;border-radius:4px"></div>
<div class="t" style="left:1131.50px;width:600px;text-align:center;top:938.92px;font-size:12.03px;line-height:12.03px;color:#333;font-weight:700;">APPLY</div>
<div style="position:absolute;left:1531px;top:925.3px;width:178px;height:37.3px;border:1px solid #fff;box-sizing:border-box;border-radius:4px"></div>
<div class="t" style="left:1320.00px;width:600px;text-align:center;top:938.92px;font-size:12.03px;line-height:12.03px;color:#fff;font-weight:700;">OK</div>
<div style="position:absolute;left:1719.3px;top:925.3px;width:178.3px;height:37.3px;border:1px solid #fff;box-sizing:border-box;border-radius:4px"></div>
<div class="t" style="left:1508.50px;width:600px;text-align:center;top:938.92px;font-size:12.03px;line-height:12.03px;color:#fff;font-weight:700;">CANCEL</div>
<svg style="position:absolute;left:1323px;top:976px;" width="10" height="10" viewBox="0 0 10 10"><path d="M1 3L7 9M1 6.5L4 9.5" stroke="#cfcfcf" stroke-width="0.8"/></svg>
<div style="position:absolute;left:1322px;top:986.3px;width:596px;height:1.2px;background:#fff"></div>
<svg style="position:absolute;left:0;top:985px" width="6" height="6" viewBox="0 0 6 6"><path d="M0 0 A6 6 0 0 0 6 6 L0 6 Z" fill="#1d302c"/></svg>
<svg style="position:absolute;left:1908px;top:981px" width="10" height="10" viewBox="0 0 10 10"><path d="M10 0 A10 10 0 0 1 0 10 L10 10 Z" fill="#9aa0a6"/></svg>
<svg style="position:absolute;left:1285px;top:101px;filter:drop-shadow(2px 2px 2px rgba(0,0,0,.45))" width="70" height="40" viewBox="0 0 70 40"><path d="M56.5 15 L27 0 L27 10 L13 10 A5 5 0 0 0 13 20 L27 20 L27 30 Z" fill="#fd4141"/></svg>
<svg style="position:absolute;left:1285px;top:182px;filter:drop-shadow(2px 2px 2px rgba(0,0,0,.45))" width="70" height="40" viewBox="0 0 70 40"><path d="M56.5 15 L27 0 L27 10 L13 10 A5 5 0 0 0 13 20 L27 20 L27 30 Z" fill="#fd4141"/></svg>
</body></html>
